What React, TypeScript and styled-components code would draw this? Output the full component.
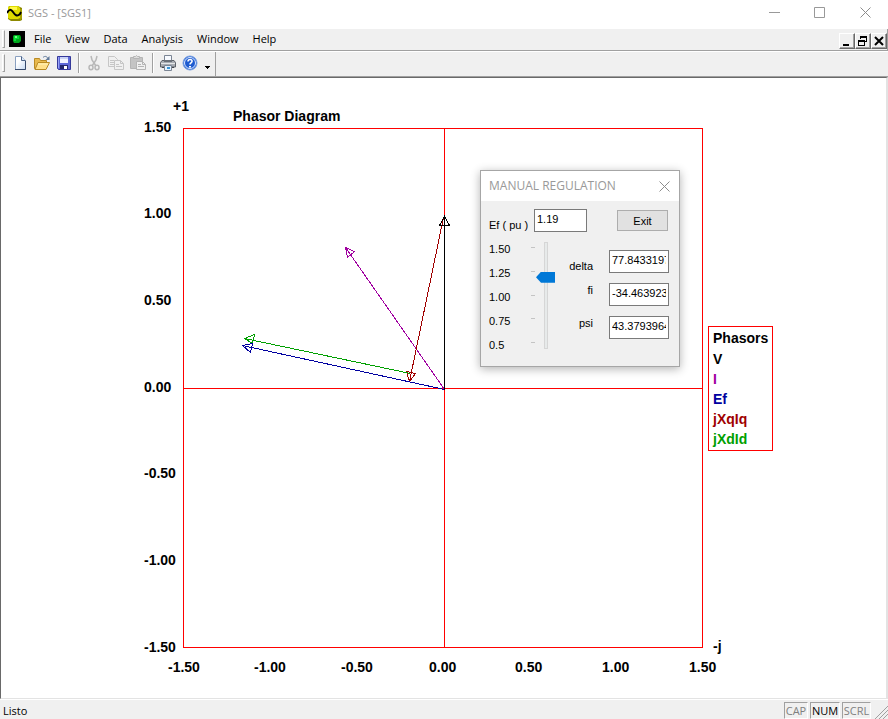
import React, { useState } from "react";
import styled, { createGlobalStyle } from "styled-components";

const GlobalStyle = createGlobalStyle`
  * { box-sizing: border-box; }
  body { margin: 0; background: #f0f0f0; }
  button, input { font: inherit; color: inherit; }
`;

const ui = `"Open Sans", "Noto Sans", sans-serif`;
const sans = `"Liberation Sans", Arial, sans-serif`;

const AppWindow = styled.div`
  display: flex;
  flex-direction: column;
  min-height: 100vh;
  background: #f0f0f0;
  color: #000;
  font: 11px/16px ${ui};
`;

const TitleBar = styled.header`
  display: flex;
  align-items: center;
  height: 29px;
  padding: 0 0 4px 7px;
  gap: 5px;
  background: #fff;
  color: #999;
`;

const WindowTitle = styled.h1`
  flex: 1;
  margin: 0;
  font: 11px/16px ${ui};
`;

const CaptionButton = styled.button<{ $width: number }>`
  display: flex;
  align-items: center;
  justify-content: center;
  width: ${(p) => p.$width}px;
  height: 24px;
  padding: 0;
  border: 0;
  background: transparent;
  color: #999;
`;

const MenuBar = styled.nav`
  display: flex;
  align-items: center;
  height: 22px;
  padding: 0 0 1px 2px;
  border-right: 1px solid #a0a0a0;
  border-bottom: 1px solid #a0a0a0;
`;

const Gripper = styled.span`
  width: 3px;
  height: 18px;
  margin-right: 4px;
  border: 1px solid #fff;
  border-right-color: #a0a0a0;
  border-bottom-color: #a0a0a0;
`;

const MenuList = styled.div`
  display: flex;
  flex: 1;
  margin-left: 2px;
`;

const MenuItem = styled.button`
  padding: 0 7px;
  border: 0;
  background: transparent;
  font: 11px/18px ${ui};
`;

const ChildButtons = styled.div`
  display: flex;
  align-self: flex-end;
`;

const ChildButton = styled.button`
  display: flex;
  width: 16px;
  height: 16px;
  padding: 1px;
  border: 1px solid;
  border-color: #fff #696969 #696969 #fff;
  background: #f0f0f0;
  box-shadow: inset -1px -1px #a0a0a0;
`;

const ToolRow = styled.div`
  display: flex;
  height: 26px;
  border-top: 1px solid #fff;
`;

const ToolBar = styled.div`
  display: flex;
  align-items: center;
  padding: 0 2px 3px 2px;
  border-right: 1px solid #a0a0a0;
`;

const ToolButton = styled.button<{ $width?: number }>`
  display: flex;
  align-items: center;
  justify-content: center;
  width: ${(p) => p.$width ?? 22}px;
  height: 22px;
  padding: 0;
  border: 0;
  background: transparent;
`;

const ToolSeparator = styled.span`
  width: 2px;
  height: 20px;
  margin: 0 3px;
  border-left: 1px solid #a0a0a0;
  border-right: 1px solid #fff;
`;

const Canvas = styled.main`
  position: relative;
  display: flex;
  flex: 1;
  align-items: flex-start;
  padding: 20px 0 20px 135px;
  border: 1px solid #696969;
  border-right: 2px solid #e3e3e3;
  border-bottom-color: #e3e3e3;
  background: #fff;
  box-shadow: 0 -1px #a0a0a0;
`;

const Chart = styled.svg`
  display: block;
  flex: none;
  overflow: visible;
  font: bold 14px ${sans};
`;

const Legend = styled.section`
  flex: none;
  margin-top: 228px;
  padding: 0 4px 1px;
  border: 1px solid #f00;
  font: bold 14px/20px ${sans};
`;

const LegendTitle = styled.h2`
  margin: 0;
  font: inherit;
  line-height: 22px;
`;

const LegendList = styled.ul`
  margin: 0;
  padding: 0;
  list-style: none;
`;

const LegendItem = styled.li<{ $color: string }>`
  color: ${(p) => p.$color};
`;

const Dialog = styled.section`
  position: absolute;
  top: 92px;
  left: 479px;
  width: 200px;
  border: 1px solid #a6a6a6;
  background: #f0f0f0;
  box-shadow: 0 2px 9px rgba(0, 0, 0, 0.3);
`;

const DialogHeader = styled.header`
  display: flex;
  align-items: center;
  justify-content: space-between;
  height: 30px;
  padding: 0 3px 0 8px;
  background: #fff;
  color: #999;
`;

const DialogTitle = styled.h2`
  margin: 0;
  font: 12px/18px ${ui};
`;

const DialogBody = styled.form`
  padding: 8px 10px 14px 8px;
  font: 11px/14px ${sans};
`;

const EfRow = styled.div`
  display: flex;
  align-items: flex-end;
`;

const EfLabel = styled.label`
  width: 45px;
`;

const TextBox = styled.input<{ $width: number }>`
  width: ${(p) => p.$width}px;
  height: 23px;
  padding: 0 2px 4px;
  border: 1px solid #7a7a7a;
  border-radius: 0;
  outline: 0;
  background: #fff;
`;

const ExitButton = styled.button`
  width: 51px;
  height: 21px;
  margin: 0 1px 1px auto;
  padding: 0;
  border: 1px solid #adadad;
  background: #e1e1e1;
`;

const Regulation = styled.div`
  display: flex;
  justify-content: space-between;
  margin-top: 10px;
`;

const Scale = styled.div`
  display: flex;
`;

const ScaleLabels = styled.div`
  display: flex;
  flex-direction: column;
  justify-content: space-between;
  width: 42px;
  height: 110px;
`;

const Ticks = styled.div`
  display: flex;
  flex-direction: column;
  justify-content: space-between;
  width: 5px;
  height: 107px;
  padding: 5px 1px 6px 0;
`;

const Tick = styled.span`
  height: 1px;
  background: #c4c4c4;
`;

const Slider = styled.input`
  appearance: none;
  writing-mode: vertical-lr;
  direction: rtl;
  width: 19px;
  height: 107px;
  margin: 0;
  background: linear-gradient(#e7eaea, #e7eaea) 9px 1px / 2px 105px no-repeat,
    linear-gradient(#d6d6d6, #d6d6d6) 8px 0 / 4px 107px no-repeat;

  &::-webkit-slider-thumb {
    appearance: none;
    width: 19px;
    height: 11px;
    border: 0;
    border-radius: 0;
    background: #0078d7;
    clip-path: polygon(0 50%, 5px 0, 100% 0, 100% 100%, 5px 100%);
  }
`;

const Angles = styled.div`
  display: grid;
  grid-template-columns: auto 60px;
  align-content: start;
  gap: 10px 16px;
  padding-top: 8px;
`;

const AngleLabel = styled.label<{ $align: "start" | "end" }>`
  align-self: ${(p) => p.$align};
  text-align: right;
`;

const StatusBar = styled.footer`
  display: flex;
  align-items: flex-end;
  height: 20px;
  padding-left: 3px;
  border-top: 1px solid #fff;
  gap: 2px;
`;

const StatusText = styled.span`
  flex: 1;
`;

const StatusCell = styled.span<{ $on?: boolean; $width: number }>`
  width: ${(p) => p.$width}px;
  height: 17px;
  border: 1px solid;
  border-color: #a0a0a0 #fff #fff #a0a0a0;
  text-align: center;
  color: ${(p) => (p.$on ? "#000" : "#808080")};
`;

const SizeGrip = styled.svg`
  margin-left: 1px;
`;

const LogoIcon = () => (
  <svg width="16" height="16" viewBox="0 0 16 16" aria-hidden="true">
    <path d="M2 1h9l4 2v12l-2 1H4l-3-2V3z" fill="#8d8900" />
    <path d="M1 2l2-1h8l2 2v10l-2 1H3l-2-1z" fill="#dedb00" />
    <path d="M3 2h7v3H3z" fill="#fff94a" />
    <path d="M13 4h2v9l-2 2z" fill="#a5a000" />
    <path d="M0 8c2-4 4-4 6-1s4 5 7 2l1-2" fill="none" stroke="#000" strokeWidth="2" />
  </svg>
);

const DocumentIcon = () => (
  <svg width="16" height="16" viewBox="0 0 16 16" aria-hidden="true">
    <path d="M0 0h16v16H0z" fill="#000" />
    <path d="M5 4h6l1 2v4l-2 2H5l-1-2V5z" fill="#00a51c" />
    <path d="M5 5h5v3H7v2H5z" fill="#05df35" />
    <path d="M6 5h2v2H6z" fill="#72ff84" />
  </svg>
);

const NewIcon = () => (
  <svg width="16" height="16" viewBox="0 0 16 16" aria-hidden="true">
    <defs>
      <linearGradient id="sheet" x2="1" y2="1">
        <stop offset=".35" stopColor="#fff" />
        <stop offset="1" stopColor="#c5d9f3" />
      </linearGradient>
    </defs>
    <path d="M3.500 1.500h6l4 4v9h-10z" fill="url(#sheet)" stroke="#8aa0c0" />
    <path d="M3 14.500h10.500V6" fill="none" stroke="#35496b" />
    <path d="M9.500 1.500v4h4" fill="#dce8f8" stroke="#4d6488" />
  </svg>
);

const OpenIcon = () => (
  <svg width="16" height="16" viewBox="0 0 16 16" aria-hidden="true">
    <path d="M.5 13.500v-10h5l1 2h6v8z" fill="#e8b94d" stroke="#b98a24" />
    <path d="M1 14.500l3-7h11.500l-3.500 7z" fill="#ffe08a" stroke="#b98a24" />
    <path d="M4 9h10" stroke="#fff2bb" />
    <path d="M9 2.500c2-2 4-1 5 1" fill="none" stroke="#60799a" />
    <path d="M15.500 1v4h-4z" fill="#60799a" />
  </svg>
);

const SaveIcon = () => (
  <svg width="16" height="16" viewBox="0 0 16 16" aria-hidden="true">
    <path d="M1.500 1.500h13v13h-12l-1-1z" fill="#5d68d8" stroke="#35399a" />
    <path d="M4 2h8v6H4z" fill="#f1f4ff" />
    <path d="M4 2h8v2H4z" fill="#c9d2f5" />
    <path d="M4 10h8v4H4z" fill="#23286c" />
    <path d="M8 11h3v3H8z" fill="#fff" />
    <path d="M2 2h1v11H2z" fill="#98a2f4" />
  </svg>
);

const CutIcon = () => (
  <svg width="16" height="16" viewBox="0 0 16 16" fill="none" stroke="#b8b8b8" aria-hidden="true">
    <path d="M5 1l1 4 4 6M11 1l-1 4-4 6" strokeWidth="1.500" />
    <ellipse cx="5" cy="12.500" rx="2" ry="2.200" strokeWidth="1.500" />
    <ellipse cx="11" cy="12.500" rx="2" ry="2.200" strokeWidth="1.500" />
  </svg>
);

const CopyIcon = () => (
  <svg width="16" height="16" viewBox="0 0 16 16" fill="#f0f0f0" stroke="#c6c6c6" aria-hidden="true">
    <path d="M.5 1.500h6l3 3v7h-9zM2 5.500h4M2 7.500h5M2 9.500h4" />
    <path d="M6.500 5.500h6l3 3v6h-9zM12.500 5.500v3h3M8 9.500h3M8 11.500h6" />
  </svg>
);

const PasteIcon = () => (
  <svg width="16" height="16" viewBox="0 0 16 16" stroke="#b4b4b4" aria-hidden="true">
    <path d="M.5 2.500h12v11H.5z" fill="#c4c4c4" />
    <path d="M3.500 3.500v-2h2l1-1 1 1h2v2z" fill="#ddd" />
    <path d="M6.500 6.500h6l3 3v5h-9z" fill="#f0f0f0" />
    <path d="M12.500 6.500v3h3M8 9.500h3M8 11.500h6" fill="none" />
  </svg>
);

const PrintIcon = () => (
  <svg width="16" height="16" viewBox="0 0 16 16" aria-hidden="true">
    <path d="M4.500.5h7v6h-7z" fill="#f7faff" stroke="#7b8594" />
    <path d="M2 5.500h12l1.500 2v4.500h-15V7.500z" fill="#a9adb3" stroke="#5c6168" />
    <path d="M4 5h8v2H4z" fill="#6a7078" />
    <path d="M1 8h14v1H1z" fill="#e4e6e8" />
    <path d="M2 12h2v1H2zM12 12h2v1h-2z" fill="#42464d" />
    <path d="M4.500 10.500h7v5h-7z" fill="#e5f2ff" stroke="#7b8594" />
    <path d="M7 12h3v2H7z" fill="#3a96d6" />
  </svg>
);

const HelpIcon = () => (
  <svg width="16" height="16" viewBox="0 0 16 16" aria-hidden="true">
    <circle cx="8" cy="8" r="7" fill="#2865d8" stroke="#7ba0df" />
    <circle cx="8" cy="8" r="5.500" fill="#1e5bd0" stroke="#dce9ff" />
    <path d="M6 6.500c0-3 4.500-2.500 4 0C9.800 8 8 8 8 9.500" fill="none" stroke="#fff" strokeWidth="1.600" />
    <path d="M7 11h2v1.500H7z" fill="#fff" />
  </svg>
);

const DropIcon = () => (
  <svg width="7" height="16" viewBox="0 0 7 16" aria-hidden="true">
    <path d="M1 11h5v1H5v1H4v1H3v-1H2v-1H1z" />
  </svg>
);

const CloseGlyph = ({ size }: { size: number }) => (
  <svg width={size} height={size} viewBox="0 0 11 11" stroke="#8c8c8c" aria-hidden="true">
    <path d="M.5.5l10 10M10.500.5l-10 10" />
  </svg>
);

const tools = [
  [
    { name: "New", Icon: NewIcon },
    { name: "Open", Icon: OpenIcon },
    { name: "Save", Icon: SaveIcon },
  ],
  [
    { name: "Cut", Icon: CutIcon, disabled: true },
    { name: "Copy", Icon: CopyIcon, disabled: true },
    { name: "Paste", Icon: PasteIcon, disabled: true },
  ],
  [
    { name: "Print", Icon: PrintIcon },
    { name: "About", Icon: HelpIcon },
  ],
];

const axis = [
  { text: "1.50", y: 132 },
  { text: "1.00", y: 218 },
  { text: "0.50", y: 305 },
  { text: "0.00", y: 392 },
  { text: "-0.50", y: 478 },
  { text: "-1.00", y: 565 },
  { text: "-1.50", y: 652 },
];

const baseAxis = [
  { text: "-1.50", x: 168 },
  { text: "-1.00", x: 254 },
  { text: "-0.50", x: 341 },
  { text: "0.00", x: 429 },
  { text: "0.50", x: 515 },
  { text: "1.00", x: 602 },
  { text: "1.50", x: 689 },
];

const phasors = [
  { color: "#a000a0", path: "M444.500 389.500L345.500 247.500M345.500 247.500L354.500 251.500L347.500 257.500Z" },
  { color: "#a00000", path: "M443.500 217.500L409.500 381.500M409.500 381.500L406.500 371.500L415.500 373.500Z" },
  { color: "#00a000", path: "M410.500 373.500L244.500 338.500M244.500 338.500L254.500 334.500L252.500 343.500Z" },
  { color: "#0000a0", path: "M444.500 389.500L242.500 345.500M242.500 345.500L252.500 343.500L250.500 352.500Z" },
  { color: "#000", path: "M444.500 389.500V216.500M444.500 216.500L439.500 225.500H449.500Z" },
];

const legend = [
  { text: "V", color: "#000" },
  { text: "I", color: "#a000a0" },
  { text: "Ef", color: "#0000a0" },
  { text: "jXqIq", color: "#a00000" },
  { text: "jXdId", color: "#00a000" },
];

const angles = [
  { name: "delta", value: "77.8433197", align: "end" as const },
  { name: "fi", value: "-34.463923", align: "start" as const },
  { name: "psi", value: "43.3793964", align: "start" as const },
];

const PhasorChart = () => (
  <Chart width="572" height="580" viewBox="136 98 572 580" role="img" aria-label="Phasor Diagram">
    <text x="173" y="111">+1</text>
    <text x="233" y="121">Phasor Diagram</text>
    <text x="713" y="651">-j</text>
    {axis.map((a) => (
      <text key={a.text} x="144" y={a.y}>{a.text}</text>
    ))}
    {baseAxis.map((a) => (
      <text key={a.text} x={a.x} y="672">{a.text}</text>
    ))}
    <path
      d="M183.500 128.500H702.500V647.500H183.500ZM444.500 128V648M183 388.500H703"
      fill="none"
      stroke="#f00"
      shapeRendering="crispEdges"
    />
    {phasors.map((p) => (
      <path key={p.color} d={p.path} fill="none" stroke={p.color} shapeRendering="crispEdges" />
    ))}
  </Chart>
);

const RegulationDialog = () => {
  const [ef, setEf] = useState("1.19");
  return (
    <Dialog role="dialog" aria-labelledby="regulation-title">
      <DialogHeader>
        <DialogTitle id="regulation-title">MANUAL REGULATION</DialogTitle>
        <CaptionButton $width={24} aria-label="Close dialog">
          <CloseGlyph size={11} />
        </CaptionButton>
      </DialogHeader>
      <DialogBody>
        <EfRow>
          <EfLabel htmlFor="ef">Ef ( pu )</EfLabel>
          <TextBox id="ef" $width={53} value={ef} onChange={(e) => setEf(e.target.value)} />
          <ExitButton type="button">Exit</ExitButton>
        </EfRow>
        <Regulation>
          <Scale>
            <ScaleLabels>
              {["1.50", "1.25", "1.00", "0.75", "0.5"].map((s) => (
                <span key={s}>{s}</span>
              ))}
            </ScaleLabels>
            <Ticks>
              <Tick /><Tick /><Tick /><Tick /><Tick />
            </Ticks>
            <Slider
              type="range"
              aria-label="Ef"
              min="0.5"
              max="1.5"
              step="0.01"
              value={ef}
              onChange={(e) => setEf(e.target.value)}
            />
          </Scale>
          <Angles>
            {angles.map((a) => (
              <React.Fragment key={a.name}>
                <AngleLabel htmlFor={a.name} $align={a.align}>{a.name}</AngleLabel>
                <TextBox id={a.name} $width={60} defaultValue={a.value} />
              </React.Fragment>
            ))}
          </Angles>
        </Regulation>
      </DialogBody>
    </Dialog>
  );
};

export default function App() {
  return (
    <AppWindow>
      <GlobalStyle />
      <TitleBar>
        <LogoIcon />
        <WindowTitle>SGS - [SGS1]</WindowTitle>
        <CaptionButton $width={45} aria-label="Minimize">
          <svg width="11" height="11" aria-hidden="true"><path d="M0 5.500h11" stroke="#999" /></svg>
        </CaptionButton>
        <CaptionButton $width={35} aria-label="Maximize">
          <svg width="11" height="11" aria-hidden="true">
            <path d="M.5.5h10v10H.5z" fill="none" stroke="#999" />
          </svg>
        </CaptionButton>
        <CaptionButton $width={46} aria-label="Close">
          <CloseGlyph size={11} />
        </CaptionButton>
      </TitleBar>
      <MenuBar>
        <Gripper />
        <DocumentIcon />
        <MenuList>
          {["File", "View", "Data", "Analysis", "Window", "Help"].map((m) => (
            <MenuItem key={m}>{m}</MenuItem>
          ))}
        </MenuList>
        <ChildButtons>
          <ChildButton aria-label="Minimize document">
            <svg width="12" height="12" aria-hidden="true"><path d="M2 9h6v2H2z" /></svg>
          </ChildButton>
          <ChildButton aria-label="Restore document">
            <svg width="12" height="12" fill="none" stroke="#000" shapeRendering="crispEdges" aria-hidden="true">
              <path d="M3.500 4V1.500h6v5H8M3 2.500h7M1.500 5.500h6v5h-6zM1 6.500h7" />
            </svg>
          </ChildButton>
          <ChildButton aria-label="Close document">
            <svg width="12" height="12" stroke="#000" strokeWidth="2" aria-hidden="true">
              <path d="M2 2l8 8M10 2l-8 8" />
            </svg>
          </ChildButton>
        </ChildButtons>
      </MenuBar>
      <ToolRow>
        <ToolBar role="toolbar" aria-label="Standard">
          <Gripper />
          {tools.map((group, i) => (
            <React.Fragment key={group[0].name}>
              {i > 0 && <ToolSeparator />}
              {group.map(({ name, Icon, ...rest }) => (
                <ToolButton key={name} aria-label={name} {...rest}>
                  <Icon />
                </ToolButton>
              ))}
            </React.Fragment>
          ))}
          <ToolButton $width={12} aria-label="Toolbar options">
            <DropIcon />
          </ToolButton>
        </ToolBar>
      </ToolRow>
      <Canvas>
        <PhasorChart />
        <Legend aria-labelledby="legend-title">
          <LegendTitle id="legend-title">Phasors</LegendTitle>
          <LegendList>
            {legend.map((l) => (
              <LegendItem key={l.text} $color={l.color}>{l.text}</LegendItem>
            ))}
          </LegendList>
        </Legend>
        <RegulationDialog />
      </Canvas>
      <StatusBar>
        <StatusText>Listo</StatusText>
        <StatusCell $width={24}>CAP</StatusCell>
        <StatusCell $width={30} $on>NUM</StatusCell>
        <StatusCell $width={29}>SCRL</StatusCell>
        <SizeGrip width="14" height="14" stroke="#a0a0a0" aria-hidden="true">
          <path d="M1 14L14 1M5 14l9-9M9 14l5-5" />
        </SizeGrip>
      </StatusBar>
    </AppWindow>
  );
}
